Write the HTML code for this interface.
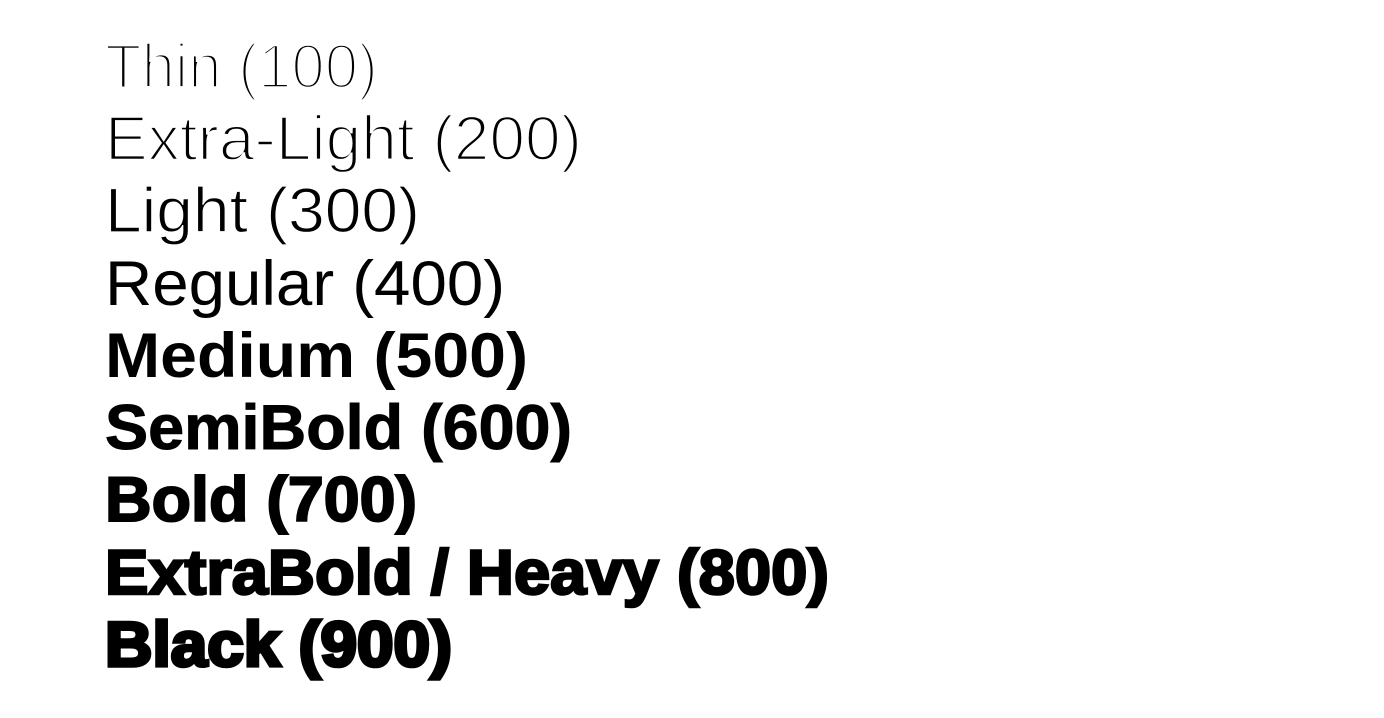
<!DOCTYPE html>
<html><head><meta charset="utf-8"><style>
html,body{margin:0;padding:0;background:#fff;width:1384px;height:718px;overflow:hidden}
svg{display:block}
text{font-family:"Liberation Sans",sans-serif;font-size:63px;fill:#000}
</style></head><body>
<svg width="1384" height="718" viewBox="0 0 1384 718">
<text x="105" y="88" textLength="273" lengthAdjust="spacingAndGlyphs" stroke="#fff" stroke-width="3.4">Thin (100)</text>
<text x="105" y="160" textLength="477" lengthAdjust="spacingAndGlyphs" stroke="#fff" stroke-width="2.4">Extra-Light (200)</text>
<text x="105" y="232" textLength="315" lengthAdjust="spacingAndGlyphs" stroke="#fff" stroke-width="1.2">Light (300)</text>
<text x="105" y="305" textLength="400" lengthAdjust="spacingAndGlyphs">Regular (400)</text>
<text x="105" y="377" textLength="423" lengthAdjust="spacingAndGlyphs" font-weight="bold">Medium (500)</text>
<text x="105" y="449" textLength="467" lengthAdjust="spacingAndGlyphs" font-weight="bold" stroke="#000" stroke-width="1">SemiBold (600)</text>
<text x="105" y="521" textLength="312" lengthAdjust="spacingAndGlyphs" font-weight="bold" stroke="#000" stroke-width="2">Bold (700)</text>
<text x="105" y="594" textLength="724" lengthAdjust="spacingAndGlyphs" font-weight="bold" stroke="#000" stroke-width="2.6">ExtraBold / Heavy (800)</text>
<text x="105" y="666" textLength="347" lengthAdjust="spacingAndGlyphs" font-weight="bold" stroke="#000" stroke-width="3.6">Black (900)</text>
</svg>
</body></html>
